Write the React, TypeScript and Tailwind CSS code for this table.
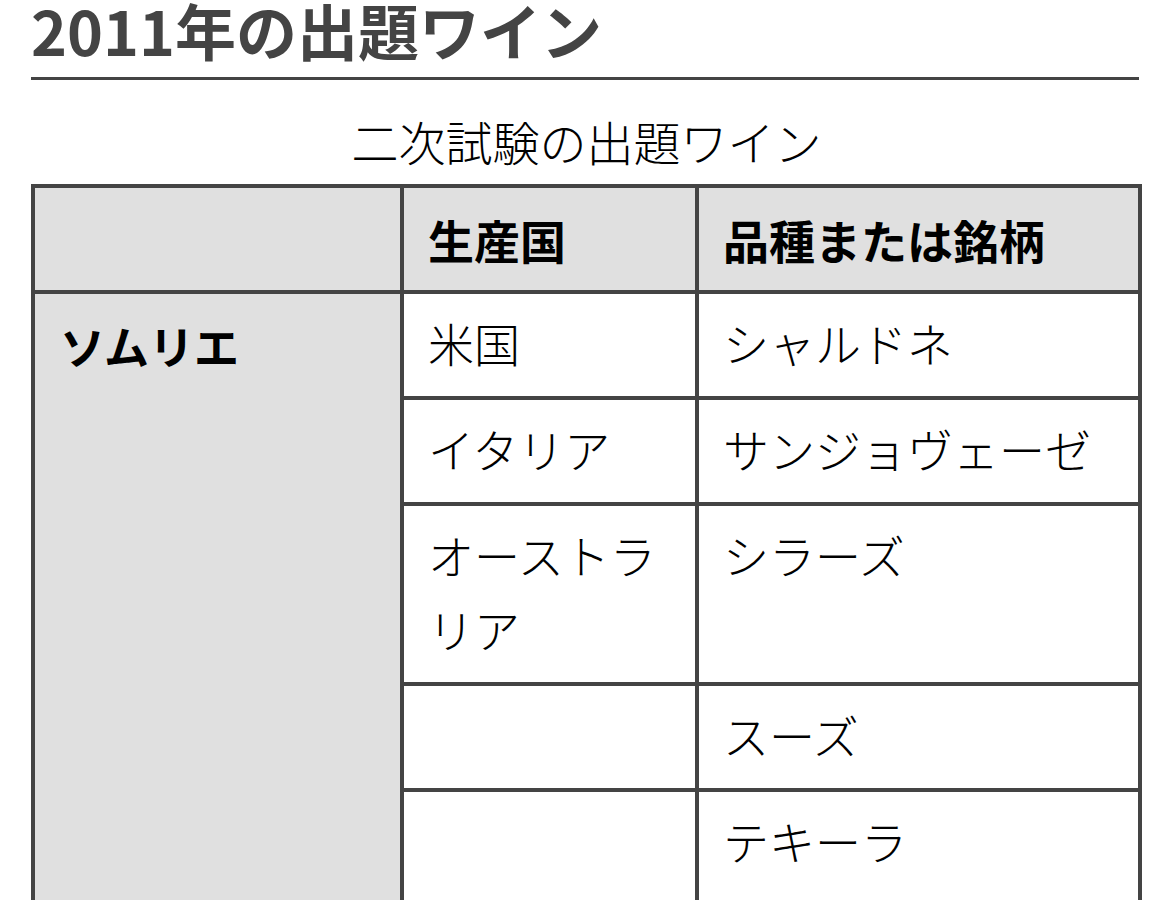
const rows = [
  { country: "米国", wine: "シャルドネ" },
  { country: "イタリア", wine: "サンジョヴェーゼ" },
  { country: "オーストラリア", wine: "シラーズ" },
  { country: "", wine: "スーズ" },
  { country: "", wine: "テキーラ" },
];

const serif = "font-['Liberation_Serif','Noto_Sans_CJK_JP',serif] font-light";
const sans = "font-['Noto_Sans_CJK_JP',sans-serif] font-bold";

export default function App() {
  return (
    <div className="bg-white min-h-screen px-[31px] pt-[2px] text-black">
      <h1
        className={`${sans} text-[#444] text-[61px] leading-[56px] pb-[19px] border-b-[3px] border-[#444]`}
      >
        2011年の出題ワイン
      </h1>
      <table className="w-[1107px] table-fixed border-collapse mt-[27px]">
        <caption className={`${serif} text-[47px] leading-[76px] text-center pb-[1px]`}>
          二次試験の出題ワイン
        </caption>
        <colgroup>
          <col className="w-[369px]" />
          <col className="w-[295px]" />
          <col className="w-[443px]" />
        </colgroup>
        <thead>
          <tr className="bg-[#e0e0e0]">
            <th className="border-[4px] border-[#444]" />
            <th
              className={`${sans} border-[4px] border-[#444] text-left align-top px-[24px] py-[14px] text-[46px] leading-[74px]`}
            >
              生産国
            </th>
            <th
              className={`${sans} border-[4px] border-[#444] text-left align-top px-[24px] py-[14px] text-[46px] leading-[74px]`}
            >
              品種または銘柄
            </th>
          </tr>
        </thead>
        <tbody>
          {rows.map((r, i) => (
            <tr key={i}>
              {i == 0 && (
                <th
                  rowSpan={rows.length}
                  className={`${sans} bg-[#e0e0e0] border-[4px] border-[#444] text-left align-top px-[25px] pt-[15px] pb-[14px] text-[45px] leading-[74px]`}
                >
                  ソムリエ
                </th>
              )}
              <td
                className={`${serif} border-[4px] border-[#444] align-top px-[24px] pt-[16px] text-[46px] leading-[74px] ${
                  i == rows.length - 1 ? "pb-[18px]" : "pb-[12px]"
                }`}
              >
                {r.country}
              </td>
              <td
                className={`${serif} border-[4px] border-[#444] align-top px-[24px] pt-[16px] text-[46px] leading-[74px] ${
                  i == rows.length - 1 ? "pb-[18px]" : "pb-[12px]"
                }`}
              >
                {r.wine}
              </td>
            </tr>
          ))}
        </tbody>
      </table>
    </div>
  );
}
